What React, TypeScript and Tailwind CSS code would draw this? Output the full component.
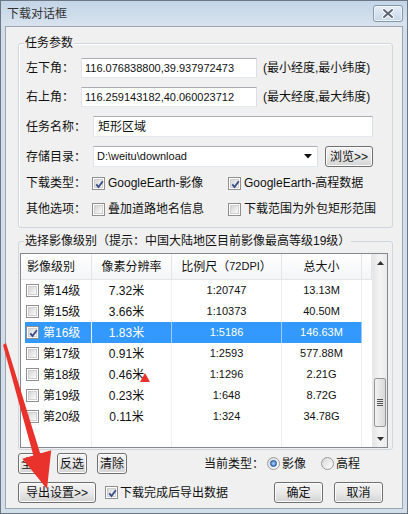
import React from 'react';

const uiFont = "font-['Liberation_Sans','Noto_Sans_CJK_SC',sans-serif]";
const numFont = "font-['Liberation_Sans','Noto_Sans_CJK_SC',sans-serif] text-[11px]";

const levels = [
  { name: '第14级', res: '7.32米', scale: '1:20747', size: '13.13M', checked: false },
  { name: '第15级', res: '3.66米', scale: '1:10373', size: '40.50M', checked: false },
  { name: '第16级', res: '1.83米', scale: '1:5186', size: '146.63M', checked: true },
  { name: '第17级', res: '0.91米', scale: '1:2593', size: '577.88M', checked: false },
  { name: '第18级', res: '0.46米', scale: '1:1296', size: '2.21G', checked: false },
  { name: '第19级', res: '0.23米', scale: '1:648', size: '8.72G', checked: false },
  { name: '第20级', res: '0.11米', scale: '1:324', size: '34.78G', checked: false },
];

const CheckBox: React.FC<{ checked?: boolean }> = ({ checked }) => (
  <span className="relative flex h-[13px] w-[13px] shrink-0 items-center justify-center border border-[#8e8f8f] bg-white">
    <span className="h-[9px] w-[9px] border border-[#d0d0d0] bg-linear-to-br from-[#d6d6d6] to-[#fbfbfb]" />
    {checked && (
      <svg className="absolute left-[1px] top-[1px]" width="11" height="11" viewBox="0 0 11 11">
        <path d="M2.2 5.4 L4.5 8 L8.8 2.2" fill="none" stroke="#3a4e8a" strokeWidth="1.9" />
      </svg>
    )}
  </span>
);

const Radio: React.FC<{ checked?: boolean }> = ({ checked }) => (
  <span className="flex h-[13px] w-[13px] shrink-0 items-center justify-center rounded-full border border-[#9a9a9a] bg-linear-to-br from-[#d8d8d8] to-[#ffffff]">
    {checked && (
      <span className="h-[7px] w-[7px] rounded-full border border-[#1f4f8f] bg-radial from-[#a8d4ff] to-[#2a6cc0]" />
    )}
  </span>
);

const Btn: React.FC<{ className?: string; children: React.ReactNode }> = ({ className, children }) => (
  <div
    className={`flex shrink-0 items-center justify-center rounded-[3px] border border-[#707070] bg-linear-to-b from-[#f4f4f4] via-[#e9e9e9] to-[#d3d3d3] text-[12px] leading-none text-[#111] shadow-[inset_0_0_0_1px_#fbfbfb] ${className ?? ''}`}
  >
    {children}
  </div>
);

const TextBox: React.FC<{ className?: string; children?: React.ReactNode }> = ({ className, children }) => (
  <div
    className={`flex shrink-0 items-center border border-[#abadb3] border-b-[#e3e9ef] border-l-[#e2e3ea] border-r-[#dbdfe6] bg-white pl-[3px] ${className ?? ''}`}
  >
    {children}
  </div>
);

const GroupLabel: React.FC<{ children: React.ReactNode }> = ({ children }) => (
  <div className="-mt-[9px] ml-[5px] w-fit bg-[#f0f0f0] px-[1px] text-[12px] leading-[16px] text-[#111]">{children}</div>
);

export default function App() {
  return (
    <div className={`relative flex h-[514px] w-[408px] flex-col overflow-hidden border border-[#6c7784] bg-[#d2deea] ${uiFont}`}>
      {/* title bar */}
      <div className="flex h-[25px] shrink-0 items-center justify-between bg-linear-to-b from-[#c3d5e7] to-[#d8e3ee] pl-[6px] pr-[4px]">
        <span className="text-[12px] text-[#333]">下载对话框</span>
        <div className="flex h-[17px] w-[30px] items-center justify-center rounded-[3px] border border-[#8397ad] bg-linear-to-b from-[#e4edf6] to-[#c6d6e7] shadow-[inset_0_0_0_1px_#eef4fa]">
          <svg width="14" height="11" viewBox="0 0 14 11">
            <path d="M3 2 L11 9 M11 2 L3 9" stroke="#ffffff" strokeWidth="4" strokeLinecap="round" />
            <path d="M3 2 L11 9 M11 2 L3 9" stroke="#5b6775" strokeWidth="2" strokeLinecap="round" />
          </svg>
        </div>
      </div>

      {/* body */}
      <div className="mx-[4px] mb-[4px] flex flex-1 flex-col border border-[#9aa6b2] bg-[#f0f0f0] text-[12px] text-[#111]">
        {/* group 1 */}
        <div className="ml-[12px] mt-[16px] flex h-[185px] w-[375px] flex-col rounded-[3px] border border-[#d0d6dc] shadow-[inset_1px_1px_0_#ffffff]">
          <GroupLabel>任务参数</GroupLabel>

          <div className="mt-[7px] flex h-[20px] items-center pl-[7px]">
            <span className="w-[55px]">左下角：</span>
            <TextBox className="h-[20px] w-[176px]">
              <span className={numFont}>116.076838800,39.937972473</span>
            </TextBox>
            <span className="ml-[6px]">(最小经度,最小纬度)</span>
          </div>

          <div className="mt-[9px] flex h-[20px] items-center pl-[7px]">
            <span className="w-[55px]">右上角：</span>
            <TextBox className="h-[20px] w-[176px]">
              <span className={numFont}>116.259143182,40.060023712</span>
            </TextBox>
            <span className="ml-[6px]">(最大经度,最大纬度)</span>
          </div>

          <div className="mt-[9px] flex h-[21px] items-center pl-[7px]">
            <span className="w-[67px]">任务名称：</span>
            <TextBox className="h-[21px] w-[280px]">
              <span className="pl-[1px]">矩形区域</span>
            </TextBox>
          </div>

          <div className="mt-[9px] flex h-[21px] items-center pl-[7px]">
            <span className="w-[67px]">存储目录：</span>
            <TextBox className="h-[21px] w-[225px] justify-between pr-[5px]">
              <span className={numFont}>D:\weitu\download</span>
              <svg width="8" height="5" viewBox="0 0 8 5">
                <path d="M0 0 L8 0 L4 4.5 Z" fill="#111" />
              </svg>
            </TextBox>
            <Btn className="ml-[7px] h-[21px] w-[48px]">浏览&gt;&gt;</Btn>
          </div>

          <div className="mt-[6px] flex h-[20px] items-center pl-[7px]">
            <span className="w-[66px]">下载类型：</span>
            <div className="flex w-[136px] items-center">
              <CheckBox checked />
              <span className="ml-[3px]">GoogleEarth-影像</span>
            </div>
            <CheckBox checked />
            <span className="ml-[3px]">GoogleEarth-高程数据</span>
          </div>

          <div className="mt-[6px] flex h-[20px] items-center pl-[7px]">
            <span className="w-[66px]">其他选项：</span>
            <div className="flex w-[136px] items-center">
              <CheckBox />
              <span className="ml-[3px]">叠加道路地名信息</span>
            </div>
            <CheckBox />
            <span className="ml-[3px]">下载范围为外包矩形范围</span>
          </div>
        </div>

        {/* group 2 */}
        <div className="ml-[12px] mt-[13px] flex w-[375px] flex-col rounded-[3px] border border-[#d0d6dc] pb-[1px]">
          <GroupLabel>选择影像级别（提示：中国大陆地区目前影像最高等级19级）</GroupLabel>

          <div className="ml-[1px] mt-[4px] flex h-[195px] w-[368px] border border-[#828790] bg-white">
            <div className="flex w-[351px] flex-col">
              {/* header */}
              <div className="flex h-[26px] shrink-0 border-b border-[#e5e5e5] bg-linear-to-b from-[#ffffff] to-[#f4f5f7]">
                <div className="flex w-[71px] items-center border-r border-[#e3e5e8] pl-[6px]">影像级别</div>
                <div className="flex w-[80px] items-center justify-center border-r border-[#e3e5e8]">像素分辨率</div>
                <div className="flex w-[110px] items-center justify-center border-r border-[#e3e5e8]">
                  比例尺（<span className="text-[11px]">72DPI</span>）
                </div>
                <div className="flex w-[80px] items-center justify-center border-r border-[#e3e5e8]">总大小</div>
                <div className="w-[10px] border-r border-[#e3e5e8]" />
              </div>

              {/* rows */}
              {levels.map((l) => {
                const sel = l.checked;
                const cell = sel ? 'bg-[#3399ff] text-white border-[#9ccbff]' : 'border-[#eeeeee]';
                return (
                  <div key={l.name} className="flex h-[21px] shrink-0">
                    <div className="flex w-[71px] border-r border-[#eeeeee] pl-[4px]">
                      <div className={`flex flex-1 items-center pl-[1px] ${sel ? 'bg-[#3399ff] text-white' : ''}`}>
                        <CheckBox checked={l.checked} />
                        <span className="ml-[4px]">{l.name}</span>
                      </div>
                    </div>
                    <div className={`flex w-[80px] items-center justify-center border-r pr-[10px] ${cell}`}>{l.res}</div>
                    <div className={`flex w-[110px] items-center justify-center border-r ${cell}`}>
                      <span className={numFont}>{l.scale}</span>
                    </div>
                    <div className={`flex w-[80px] items-center justify-center border-r ${cell}`}>
                      <span className={numFont}>{l.size}</span>
                    </div>
                    <div className="w-[10px]" />
                  </div>
                );
              })}

              <div className="flex flex-1">
                <div className="w-[71px] border-r border-[#eeeeee]" />
                <div className="w-[80px] border-r border-[#eeeeee]" />
                <div className="w-[110px] border-r border-[#eeeeee]" />
                <div className="w-[80px] border-r border-[#eeeeee]" />
              </div>
            </div>

            {/* scrollbar */}
            <div className="flex w-[16px] flex-col border-l border-[#e8e8e8] bg-linear-to-r from-[#e6e6e6] via-[#f4f4f4] to-[#eaeaea]">
              <div className="flex h-[17px] items-center justify-center">
                <svg width="7" height="4" viewBox="0 0 7 4">
                  <path d="M0 4 L3.5 0 L7 4 Z" fill="#303030" />
                </svg>
              </div>
              <div className="h-[107px]" />
              <div className="mx-[1px] flex h-[49px] items-center justify-center rounded-[2px] border border-[#979797] bg-linear-to-r from-[#f2f2f2] to-[#d9d9d9]">
                <div className="flex flex-col gap-[1px]">
                  <div className="h-[1px] w-[6px] bg-[#555]" />
                  <div className="h-[1px] w-[6px] bg-[#555]" />
                  <div className="h-[1px] w-[6px] bg-[#555]" />
                  <div className="h-[1px] w-[6px] bg-[#555]" />
                </div>
              </div>
              <div className="flex-1" />
              <div className="flex h-[17px] items-center justify-center">
                <svg width="7" height="4" viewBox="0 0 7 4">
                  <path d="M0 0 L7 0 L3.5 4 Z" fill="#303030" />
                </svg>
              </div>
            </div>
          </div>
        </div>

        {/* selection buttons */}
        <div className="ml-[12px] mt-[3px] flex h-[21px] items-center">
          <Btn className="h-[21px] w-[30px]">全选</Btn>
          <Btn className="ml-[9px] h-[21px] w-[30px]">反选</Btn>
          <Btn className="ml-[10px] h-[21px] w-[30px]">清除</Btn>
          <span className="ml-[77px]">当前类型：</span>
          <span className="ml-[3px]"><Radio checked /></span>
          <span className="ml-[2px]">影像</span>
          <span className="ml-[15px]"><Radio /></span>
          <span className="ml-[2px]">高程</span>
        </div>

        {/* bottom row */}
        <div className="ml-[12px] mr-[19px] mt-[8px] flex h-[21px] items-center">
          <Btn className="h-[21px] w-[78px]">导出设置&gt;&gt;</Btn>
          <span className="ml-[9px]"><CheckBox checked /></span>
          <span className="ml-[2px]">下载完成后导出数据</span>
          <Btn className="ml-auto h-[21px] w-[49px]">确定</Btn>
          <Btn className="ml-[11px] h-[21px] w-[49px]">取消</Btn>
        </div>
      </div>

      {/* annotation overlay */}
      <svg className="pointer-events-none absolute left-0 top-0" width="408" height="514" viewBox="0 0 408 514">
        <polygon points="2,344 5,342 39.2,452.5 50.2,449.2 46,488 21.4,457.8 32.4,454.5" fill="#e8322b" />
        <polygon points="144,372 149,381 139,381" fill="#e8322b" />
      </svg>
    </div>
  );
}
